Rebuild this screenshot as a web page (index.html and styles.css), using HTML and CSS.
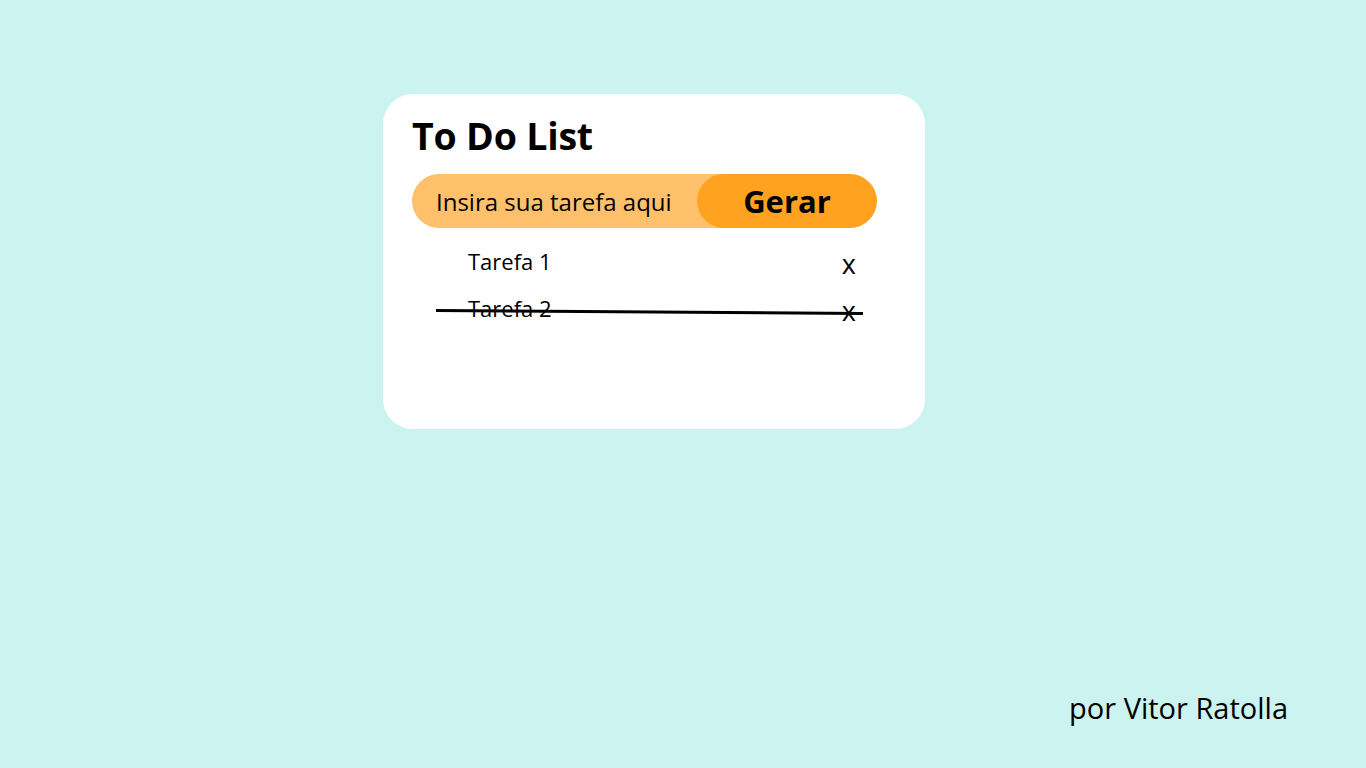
FILE: index.html
```html
<!DOCTYPE html>
<html lang="pt-BR">
<head>
<meta charset="utf-8">
<title>To Do List</title>
<link rel="stylesheet" href="styles.css">
</head>
<body>
<main class="page">
  <section class="card">
    <h1 class="title">To Do List</h1>
    <form class="entry">
      <input class="entry-input" type="text" placeholder="Insira sua tarefa aqui">
      <button class="entry-btn" type="button">Gerar</button>
    </form>
    <ul class="tasks">
      <li class="task"><span class="task-name">Tarefa 1</span><span class="task-del">x</span></li>
      <li class="task done"><span class="task-name">Tarefa 2</span><span class="task-del">x</span><span class="strike"></span></li>
    </ul>
  </section>
  <footer class="credit">por Vitor Ratolla</footer>
</main>
</body>
</html>
```
FILE: styles.css
```css
* { box-sizing: border-box; }
html, body { margin: 0; padding: 0; }
body {
  background: #cbf3ef;
  font-family: "Open Sans", "Noto Sans", sans-serif;
  color: #000;
  width: 1366px;
  height: 768px;
  overflow: hidden;
}
.page {
  position: relative;
  width: 1366px;
  height: 768px;
  padding: 94px 0 0 383px;
}
.card {
  width: 542px;
  height: 335px;
  background: #fff;
  border-radius: 30px;
  padding: 12px 48px 0 29px;
}
.title {
  margin: 0;
  font-size: 37.5px;
  font-weight: 700;
  line-height: 60px;
  letter-spacing: -0.2px;
}
.entry {
  margin: 8px 0 0 0;
  display: flex;
  height: 54px;
  border-radius: 27px;
  background: #ffc06b;
  overflow: hidden;
}
.entry-input {
  flex: 1;
  min-width: 0;
  border: none;
  background: transparent;
  padding: 0 0 0 24px;
  font-family: inherit;
  font-size: 24px;
  color: #000;
  outline: none;
}
.entry-input::placeholder { color: #000; opacity: 1; }
.entry-btn {
  width: 180px;
  border: none;
  border-radius: 27px;
  background: #ffa21f;
  font-family: inherit;
  font-weight: 700;
  font-size: 31px;
  color: #000;
  padding: 0 0 0 0;
}
.tasks {
  list-style: none;
  margin: 10px 0 0 0;
  padding: 0 21px 0 56px;
}
.task {
  position: relative;
  display: flex;
  justify-content: space-between;
  align-items: center;
  height: 47px;
}
.task-name { font-size: 22px; line-height: 1.2; }
.task-del { font-size: 27px; line-height: 1; margin-top: 4px; }
.strike {
  position: absolute;
  left: -32px;
  width: 427px;
  top: 24px;
  height: 3px;
  background: #000;
  transform: rotate(0.4deg);
  transform-origin: left center;
}
.credit {
  position: absolute;
  right: 78px;
  top: 688px;
  font-size: 29px;
  line-height: 40px;
}
```
